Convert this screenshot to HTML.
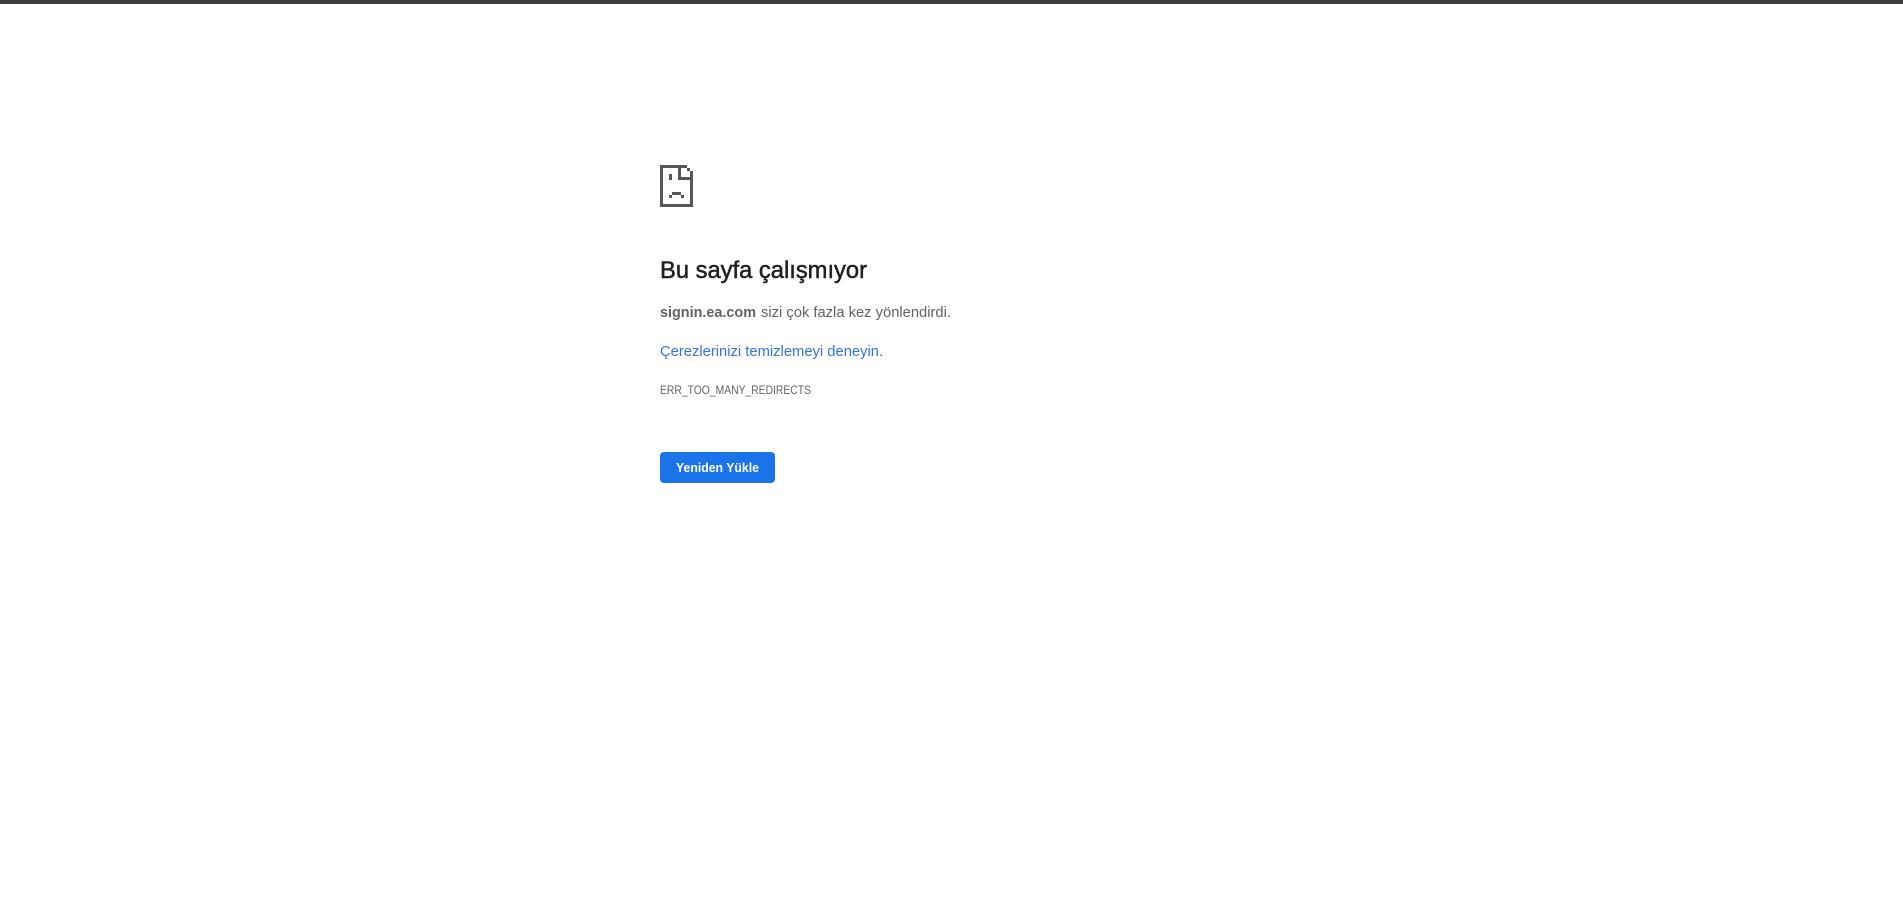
<!DOCTYPE html>
<html lang="tr">
<head>
<meta charset="utf-8">
<title>signin.ea.com</title>
<style>
html,body{margin:0;padding:0;width:1903px;height:911px;background:#fff;overflow:hidden}
svg{position:absolute;left:0;top:0;display:block}
text{font-family:"Liberation Sans",sans-serif}
</style>
</head>
<body>
<svg width="1903" height="911" viewBox="0 0 1903 911" xmlns="http://www.w3.org/2000/svg">
<rect x="0" y="0" width="1903" height="4" fill="#3c3c3c"/>
<g fill="#555658" shape-rendering="crispEdges">
<rect x="660" y="165" width="27" height="3"/>
<rect x="660" y="165" width="3" height="42"/>
<rect x="660" y="204" width="33" height="3"/>
<rect x="690" y="171" width="3" height="36"/>
<rect x="687" y="168" width="3" height="3"/>
<rect x="678" y="165" width="3" height="15"/>
<rect x="678" y="177" width="15" height="3"/>
<rect x="669" y="174" width="3" height="6"/>
<rect x="672" y="192" width="9" height="3"/>
<rect x="669" y="195" width="3" height="3"/>
<rect x="681" y="195" width="3" height="3"/>
</g>
<text x="660" y="278" font-size="24" fill="#202124" textLength="207" lengthAdjust="spacingAndGlyphs" stroke="#202124" stroke-width="0.5">Bu sayfa çalışmıyor</text>
<text x="660" y="317" font-size="15" font-weight="700" fill="#5f6368" textLength="96" lengthAdjust="spacingAndGlyphs">signin.ea.com</text>
<text x="761" y="317" font-size="15" fill="#5f6368" textLength="190" lengthAdjust="spacingAndGlyphs">sizi çok fazla kez yönlendirdi.</text>
<text x="660" y="356" font-size="15" fill="#3372e6" textLength="219" lengthAdjust="spacingAndGlyphs">Çerezlerinizi temizlemeyi deneyin</text>
<text x="879" y="356" font-size="15" fill="#5f6368">.</text>
<text x="660" y="394" font-size="12" fill="#5f6368" textLength="151" lengthAdjust="spacingAndGlyphs">ERR_TOO_MANY_REDIRECTS</text>
<rect x="660" y="452" width="115" height="31" rx="4" ry="4" fill="#1a73e8"/>
<text x="676" y="472" font-size="13" font-weight="700" fill="#ffffff" textLength="83" lengthAdjust="spacingAndGlyphs">Yeniden Yükle</text>
</svg>
</body>
</html>
